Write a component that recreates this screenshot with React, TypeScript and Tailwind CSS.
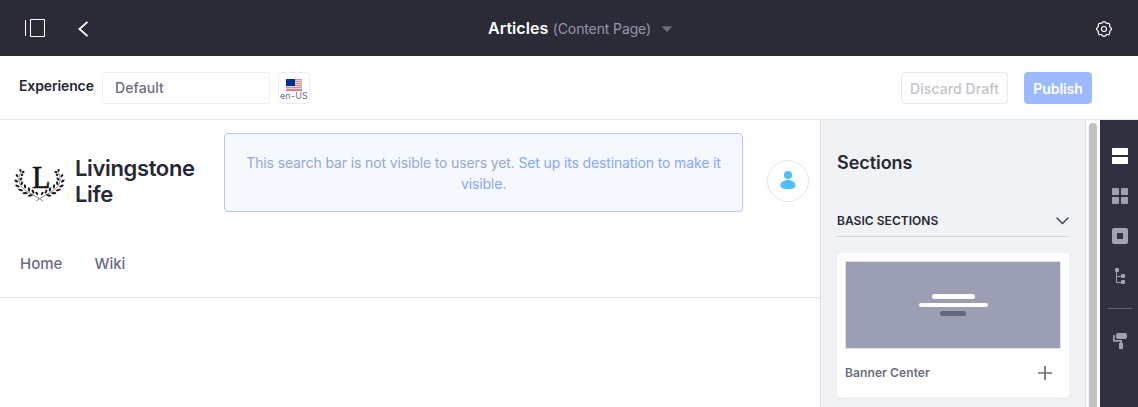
import React from "react";

type Leaf = { x: number; y: number; r: number; l: number };

const leaves: Leaf[] = [
  { x: 9.2, y: 12, r: -35, l: 1.4 },
  { x: 6.4, y: 10.400, r: 50, l: 1.4 },
  { x: 8, y: 14.8, r: -30, l: 1.3 },
  { x: 3, y: 15.6, r: 50, l: 1.7 },
  { x: 7, y: 19, r: -50, l: 1.8 },
  { x: 2.2, y: 21, r: 35, l: 2 },
  { x: 7.8, y: 23.2, r: -75, l: 1.9 },
  { x: 3.4, y: 26, r: 25, l: 2.3 },
  { x: 11, y: 26.4, r: 80, l: 2.1 },
  { x: 6.6, y: 30, r: 15, l: 2.5 },
  { x: 15, y: 29.4, r: 75, l: 2.2 },
  { x: 11.2, y: 33.2, r: 0, l: 2.6 },
  { x: 19, y: 31.6, r: 65, l: 2.2 },
  { x: 16.4, y: 35.4, r: -12, l: 2.6 },
  { x: 22.8, y: 33.4, r: 55, l: 1.9 },
];

function Branch() {
  return (
    <g>
      <path
        d="M8 11C4 16 4 21 7 26S19 34 29 41"
        fill="none"
        stroke="#333"
        strokeWidth="0.6"
      />
      {leaves.map((p, i) => (
        <ellipse
          key={i}
          cx={p.x}
          cy={p.y}
          rx={p.l}
          ry={1.1}
          transform={`rotate(${p.r} ${p.x} ${p.y})`}
          fill="#1b1b1b"
        />
      ))}
    </g>
  );
}

function Logo() {
  return (
    <svg width="52" height="54" viewBox="0 -8 52 54" className="shrink-0">
      <Branch />
      <g transform="translate(51 0) scale(-1 1)">
        <Branch />
      </g>
      <text
        x="18"
        y="27.600"
        fontSize="31"
        textLength="18.500"
        lengthAdjust="spacingAndGlyphs"
        fill="#151515"
        stroke="#151515"
        strokeWidth="0.600"
        className="font-['Liberation_Serif',serif]"
      >
        L
      </text>
    </svg>
  );
}

function Flag() {
  return (
    <svg width="16" height="12" viewBox="0 0 16 12">
      <rect width="16" height="12" fill="#edcdd0" />
      {[0, 2, 4, 6, 8, 10].map((y) => (
        <rect key={y} y={y} width="16" height="1" fill="#dc8d92" />
      ))}
      <rect y="11" width="16" height="1" fill="#d8777e" />
      <rect width="9" height="7" fill="#002f94" />
    </svg>
  );
}

function Gear() {
  const points = Array.from({ length: 65 }, (_, i) => {
    const a = (i / 64) * Math.PI * 2;
    const r = 6.85 + 0.6 * Math.cos(a * 8);
    return `${(8 + r * Math.cos(a)).toFixed(2)},${(8 + r * Math.sin(a)).toFixed(2)}`;
  }).join(" ");
  return (
    <svg width="16" height="16" viewBox="0 0 16 16" fill="none" stroke="#fff">
      <polygon points={points} strokeWidth="1.2" strokeLinejoin="round" />
      <circle cx="8" cy="8" r="2.500" strokeWidth="1.1" />
    </svg>
  );
}

function ControlBar() {
  return (
    <header className="flex h-14 items-center bg-[#2b2b37]">
      <div className="flex flex-1 items-center pl-[25px]">
        <svg width="20" height="18" viewBox="0 0 20 18" fill="none" stroke="#fff">
          <path d="M.5 1v16M5.500.5h14v17h-14z" />
        </svg>
        <svg width="11" height="16" viewBox="0 0 11 16" fill="none" stroke="#fff" strokeWidth="1.8" className="mt-0.5 ml-[33px]">
          <path d="M9.500.8 1.500 8l8 7.200" />
        </svg>
      </div>
      <div className="flex items-center pl-[23px]">
        <span className="text-base font-semibold tracking-[0.05px] text-white">Articles</span>
        <span className="ml-[4.500px] pt-0.5 text-sm tracking-[-0.12px] text-[#9596b0]">(Content Page)</span>
        <svg width="10" height="6" viewBox="0 0 10 6" className="mt-0.5 ml-[11px]">
          <path d="M.8.3h8.400q1 0 .3.900L5.600 5.400q-.6.600-1.200 0L.5 1.200Q-.2.300.8.300" fill="#6b6c7e" />
        </svg>
      </div>
      <div className="flex flex-1 justify-end pt-0.5 pr-[26px]">
        <Gear />
      </div>
    </header>
  );
}

function Toolbar() {
  return (
    <div className="flex h-16 items-start border-b border-[#e7e7ed] pt-4 pr-[46px] pl-[19px]">
      <span className="w-[83px] pt-1 text-sm leading-5 font-semibold tracking-[-0.13px] text-[#272833]">Experience</span>
      <div className="flex h-8 w-[168px] items-center rounded-[3px] border border-[#eeeef2] pl-3 text-sm font-medium tracking-[0.1px] text-[#6b6c7e]">
        Default
      </div>
      <div className="ml-2 flex h-8 w-8 flex-col items-center rounded-[4px] border border-[#ededf1] pt-1.5">
        <Flag />
        <span className="text-[9px] leading-[10px] tracking-[0.2px] whitespace-nowrap text-[#6b6c7e]">en-US</span>
      </div>
      <div className="ml-auto flex gap-4">
        <button className="h-8 w-[107px] rounded-[4px] border border-[#e7e7ed] pt-px text-sm font-medium tracking-[0.1px] whitespace-nowrap text-[#c3c3cb]">
          Discard Draft
        </button>
        <button className="h-8 w-[68px] rounded-[4px] bg-[#9dbaff] pt-0.5 text-sm font-semibold tracking-[-0.05px] text-white">Publish</button>
      </div>
    </div>
  );
}

function PageCanvas() {
  return (
    <main className="w-[820px]">
      <div className="h-[178px] border-b border-[#e2e2e6]">
        <div className="flex h-[117px] items-start">
          <div className="flex w-[224px] items-start pt-[35px] pl-[13.500px]">
            <div className="-mt-[3px]">
              <Logo />
            </div>
            <h1 className="ml-[9.500px] text-[22px] leading-[26px] font-semibold tracking-[-0.36px] text-[#272833]">
              Livingstone
              <br />
              Life
            </h1>
          </div>
          <div className="mt-[13px] h-[79px] w-[519px] rounded-[4px] border border-[#b9c8eb] bg-[#f5f8fd] pt-[18px] text-center text-sm leading-[21px] tracking-[-0.135px] text-[#96a9d1]">
            This search bar is not visible to users yet. <a className="text-[#86a8fa]">Set up its destination to make it<br />visible.</a>
          </div>
          <div className="mt-10 ml-6 flex h-[42px] w-[42px] items-center justify-center rounded-full border border-[#e5e5eb] pb-0.5">
            <svg width="16" height="20" viewBox="0 0 16 20" fill="#50bfff">
              <circle cx="8" cy="5" r="4" />
              <path d="M8 10c4.700 0 7.600 2.500 7.600 5.500 0 2-2.100 3.500-7.600 3.500S.4 17.500.4 15.500C.4 12.500 3.300 10 8 10" />
            </svg>
          </div>
        </div>
        <nav className="flex gap-8 pt-4 pl-5 text-[15px] leading-[22px] font-medium text-[#6b6c7e]">
          <a>Home</a>
          <a>Wiki</a>
        </nav>
      </div>
    </main>
  );
}

function SectionsPanel() {
  return (
    <aside className="w-[266px] border-x border-[#e0e1e8] border-r-[#e2e2e6] bg-[#f1f2f6] pr-4 pl-4">
      <h2 className="pt-[31px] text-lg leading-6 font-semibold tracking-[-0.05px] text-[#272833]">Sections</h2>
      <div className="mt-[29px] flex h-[33px] w-[232px] items-center justify-between border-b border-[#d5d6e1] pt-0.5">
        <span className="text-xs font-semibold tracking-[0.04px] text-[#272833]">BASIC SECTIONS</span>
        <svg width="13" height="8" viewBox="0 0 13 8" fill="none" stroke="#393a4a" strokeWidth="1.400" strokeLinecap="round">
          <path d="m1 1 5.500 5.500L12 1" />
        </svg>
      </div>
      <div className="mt-4 h-36 w-[232px] rounded-[4px] bg-white p-2">
        <div className="flex h-22 flex-col items-center border border-[#e1e2ea] bg-[#9c9eb4] pt-8">
          <span className="h-[5px] w-[43px] rounded-full bg-white" />
          <span className="mt-1 h-1 w-[69px] rounded-full bg-white" />
          <span className="mt-1 h-[5px] w-[26px] rounded-full bg-[#656678]" />
        </div>
        <div className="flex items-center justify-between pt-4 pr-[9px]">
          <span className="text-xs leading-4 font-semibold tracking-[0.1px] text-[#6b6c7e]">Banner Center</span>
          <svg width="14" height="14" viewBox="0 0 14 14" stroke="#6b6c7e" strokeWidth="1.700">
            <path d="M7 0v14M0 7h14" />
          </svg>
        </div>
      </div>
    </aside>
  );
}

function ToolRail() {
  return (
    <aside className="flex w-[38px] flex-col items-center bg-[#30313f] pt-7 pr-px pl-[3px] text-[#a0a1b5]">
      <svg width="16" height="16" viewBox="0 0 16 16" fill="#fff">
        <rect width="16" height="7" rx=".7" />
        <rect y="9" width="16" height="7" rx=".7" />
      </svg>
      <svg width="16" height="16" viewBox="0 0 16 16" fill="currentColor" className="mt-6">
        <rect width="7" height="7" rx=".8" />
        <rect x="9" width="7" height="7" rx=".8" />
        <rect y="9" width="7" height="7" rx=".8" />
        <rect x="9" y="9" width="7" height="7" rx=".8" />
      </svg>
      <svg width="16" height="16" viewBox="0 0 16 16" fill="currentColor" className="mt-6">
        <path fillRule="evenodd" d="M2 0h12a2 2 0 0 1 2 2v12a2 2 0 0 1-2 2H2a2 2 0 0 1-2-2V2a2 2 0 0 1 2-2m3 5v6h6V5z" />
      </svg>
      <svg width="16" height="16" viewBox="0 0 16 16" fill="currentColor" className="mt-6">
        <rect x="3" width="4" height="4" rx="1" />
        <rect x="9" y="6" width="4" height="4" rx="1" />
        <rect x="9" y="12" width="4" height="4" rx="1" />
        <path d="M4 3h1v5h5v1H5v5h5v1H4z" />
      </svg>
      <div className="mt-6 h-px w-6 bg-[#65667b]" />
      <svg width="16" height="16" viewBox="0 0 16 16" fill="currentColor" className="mt-6">
        <rect x="4" width="11" height="6" rx="2" />
        <path d="M1 2h1.700v5H10v3h1v6H7v-6h1.200V8.700H2.500Q1 8.700 1 7.200z" />
      </svg>
    </aside>
  );
}

export default function App() {
  return (
    <div className="flex h-[407px] w-[1138px] flex-col overflow-hidden bg-white font-['Inter',sans-serif]">
      <ControlBar />
      <Toolbar />
      <div className="flex min-h-0 flex-1">
        <PageCanvas />
        <SectionsPanel />
        <div className="w-[14px] bg-[#fafafa] pt-[3px] pl-[3px]">
          <div className="h-full w-2 rounded-t-full bg-[#c1c1c1]" />
        </div>
        <ToolRail />
      </div>
    </div>
  );
}
